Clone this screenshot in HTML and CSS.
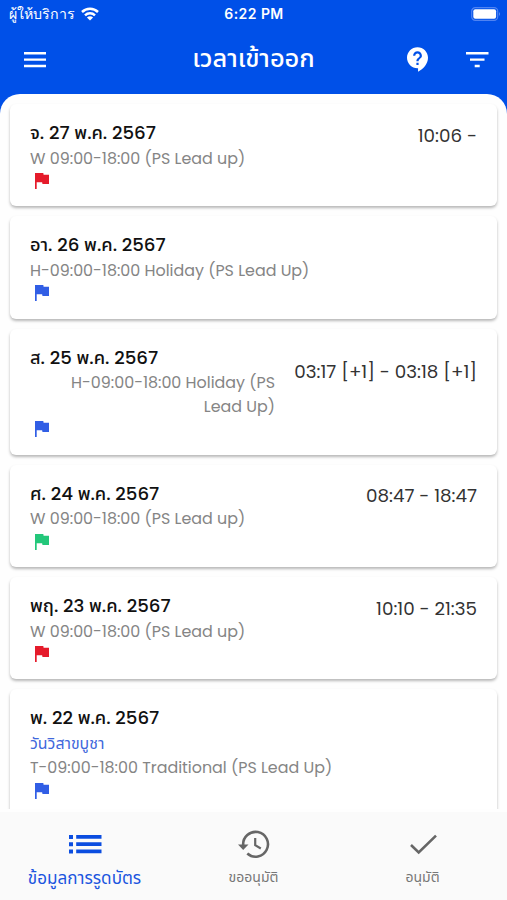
FILE: index.html
```
<!DOCTYPE html>
<html lang="th">
<head>
<meta charset="utf-8">
<title>เวลาเข้าออก</title>
<link rel="stylesheet" href="styles.css">
</head>
<body>
<svg class="defs" width="0" height="0"><symbol id="flag" viewBox="0 0 14 16"><path d="M0 0H8.3L8.6 1.8H14V11H7.5L7.1 9.2H1.7V16H0Z"/></symbol></svg>
<div class="app">
  <header class="header">
    <div class="status">
      <div class="carrier"><span>ผู้ให้บริการ</span>
        <svg width="18" height="14" viewBox="0 0 18 14" fill="none" stroke="#fff" stroke-width="2.5"><path d="M1 5a11.5 11.5 0 0 1 16 0M4 8.3a7.3 7.3 0 0 1 10 0"/><path d="M9 13.6 5.9 10.6a4.6 4.6 0 0 1 6.2 0Z" fill="#fff" stroke="none"/></svg>
      </div>
      <span class="clock">6:22 PM</span>
      <svg class="battery" width="30" height="14" viewBox="0 0 30 14"><rect x=".7" y=".7" width="26" height="12.6" rx="3.6" fill="none" stroke="#4f83f2" stroke-width="1.2"/><rect x="2.3" y="2.3" width="22.8" height="9.4" rx="2" fill="#fff"/><path d="M28 4.8q1.8 2.2 0 4.4Z" fill="#6f9af5"/></svg>
    </div>
    <div class="bar">
      <svg class="menu" width="22" height="16" viewBox="0 0 22 16" fill="#fff"><path d="M0 0h22v2.4H0zM0 6.4h22v2.4H0zM0 12.8h22v2.4H0z"/></svg>
      <h1>เวลาเข้าออก</h1>
      <div class="actions">
        <svg width="21" height="25" viewBox="2 2 19 22" fill="#fff"><path d="M11.5 2C6.26 2 2 6.26 2 11.5S6.26 21 11.5 21h.5v3c4.86-2.34 9-7 9-12.5C21 6.26 16.74 2 11.5 2zm1 16h-2v-2h2zm0-3.5h-2c0-3.25 3-3 3-5 0-1.1-.9-2-2-2s-2 .9-2 2h-2c0-2.21 1.79-4 4-4s4 1.79 4 4c0 2.5-3 2.75-3 5z"/></svg>
        <svg width="24" height="16" viewBox="0 0 24 16" fill="#fff"><path d="M1 0h22.5v2.4H1zM5 6.4h14.5v2.4H5zM9.7 12.8h5v2.4h-5z"/></svg>
      </div>
    </div>
  </header>
  <main class="sheet">
    <article class="card">
      <div class="info"><h2>จ. 27 พ.ค. 2567</h2><p>W 09:00-18:00 (PS Lead up)</p><svg class="flag red"><use href="#flag"/></svg></div>
      <div class="time">10:06 -</div>
    </article>
    <article class="card">
      <div class="info"><h2>อา. 26 พ.ค. 2567</h2><p>H-09:00-18:00 Holiday (PS Lead Up)</p><svg class="flag blue"><use href="#flag"/></svg></div>
    </article>
    <article class="card">
      <div class="info"><h2>ส. 25 พ.ค. 2567</h2><p class="wrapped">H-09:00-18:00 Holiday (PS<br>Lead Up)</p><svg class="flag blue"><use href="#flag"/></svg></div>
      <div class="time lower">03:17 [+1] - 03:18 [+1]</div>
    </article>
    <article class="card">
      <div class="info"><h2>ศ. 24 พ.ค. 2567</h2><p>W 09:00-18:00 (PS Lead up)</p><svg class="flag green"><use href="#flag"/></svg></div>
      <div class="time">08:47 - 18:47</div>
    </article>
    <article class="card">
      <div class="info"><h2>พฤ. 23 พ.ค. 2567</h2><p>W 09:00-18:00 (PS Lead up)</p><svg class="flag red"><use href="#flag"/></svg></div>
      <div class="time">10:10 - 21:35</div>
    </article>
    <article class="card">
      <div class="info"><h2>พ. 22 พ.ค. 2567</h2><p class="holiday">วันวิสาขบูชา</p><p>T-09:00-18:00 Traditional (PS Lead Up)</p><svg class="flag blue"><use href="#flag"/></svg></div>
    </article>
  </main>
  <nav class="tabs">
    <a class="tab active"><svg width="34" height="34" viewBox="0 0 34 34" fill="#0b4de0"><path d="M1 8h4v4H1zM1 15.2h4v4H1zM1 22.4h4v4H1zM8.2 8H33.5v3.8H8.2zM8.2 15.2H33.5V19H8.2zM8.2 22.4H33.5v3.8H8.2z"/></svg><span>ข้อมูลการรูดบัตร</span></a>
    <a class="tab"><svg width="34" height="34" viewBox="0 0 34 34" fill="none" stroke="#666" stroke-width="2.6"><path d="M6.2 18.2A12.4 12.4 0 1 1 10.3 26.5"/><path d="M1 17.5h10.5L6.2 23z" fill="#666" stroke="none"/><path d="M18.2 11v7.2l5.6 3.3" stroke-width="2.2"/></svg><span>ขออนุมัติ</span></a>
    <a class="tab"><svg width="34" height="34" viewBox="0 0 34 34" fill="none" stroke="#666" stroke-width="2.6"><path d="M5 18 12.7 25.4 30 8.6"/></svg><span>อนุมัติ</span></a>
  </nav>
</div>
</body>
</html>
```
FILE: styles.css
```
* { box-sizing: border-box; }
body { margin: 0; background: #0050e8; font-family: Poppins, "Noto Sans Thai", "Noto Sans", sans-serif; }
h1, h2, p { margin: 0; }
svg { display: block; flex: none; }
.defs { position: absolute; }
.app { width: 507px; height: 900px; display: flex; flex-direction: column; overflow: hidden; }
.header { height: 94px; flex: none; color: #fff; }
.status { height: 27px; padding: 0 6px 0 9px; display: grid; grid-template-columns: 1fr auto 1fr; align-items: center; }
.carrier { display: flex; align-items: center; gap: 6px; font: 14.2px/24px "Noto Sans", sans-serif; }
.clock { font: 600 14px/24px Inter, sans-serif; letter-spacing: .45px; margin-right: 2px; }
.battery { justify-self: end; }
.bar { height: 65px; padding: 0 18px 0 24px; display: grid; grid-template-columns: 1fr auto 1fr; align-items: center; }
.bar h1 { font: 500 25.4px/40px "Noto Sans Thai", "Noto Sans", sans-serif; margin: -2px 6px 0 0; }
.actions { display: flex; align-items: center; justify-content: flex-end; gap: 37px; }
.sheet { flex: 1; min-height: 0; overflow: hidden; background: #fefefe; border-radius: 20px 20px 0 0; border-bottom: 3px solid #fefefe; padding: 10px 10px 0; display: flex; flex-direction: column; gap: 10px; }
.card { flex: none; min-height: 102.4px; padding: 16px 20px 14.5px; background: #fff; border-radius: 6px; box-shadow: 0 2px 3px rgba(0,0,0,.28); display: flex; justify-content: space-between; }
.card:last-child { padding-bottom: 20px; }
.info h2 { font-size: 18.2px; line-height: 26px; height: 26.5px; font-weight: 500; color: #111; }
.info p { font-size: 15.9px; line-height: 23.4px; color: #858585; white-space: nowrap; }
.info .wrapped { width: 245px; text-align: right; }
.info .holiday { color: #3f68dc; line-height: 24.5px; }
.flag { width: 14px; height: 16px; margin: 3px 0 3px 5px; }
.red { fill: #e51b2b; }
.blue { fill: #315ee5; }
.green { fill: #23c77a; }
.time { font-size: 18.3px; line-height: 28px; color: #333; padding-top: 1.5px; white-space: nowrap; }
.lower { padding-top: 13.5px; }
.tabs { flex: none; height: 88px; background: #fafafa; display: grid; grid-template-columns: repeat(3, 1fr); }
.tab { display: flex; flex-direction: column; align-items: center; padding-top: 15px; color: #777; font-size: 14px; line-height: 32px; }
.active { color: #1b55df; font-size: 17.1px; line-height: 34px; }
```
